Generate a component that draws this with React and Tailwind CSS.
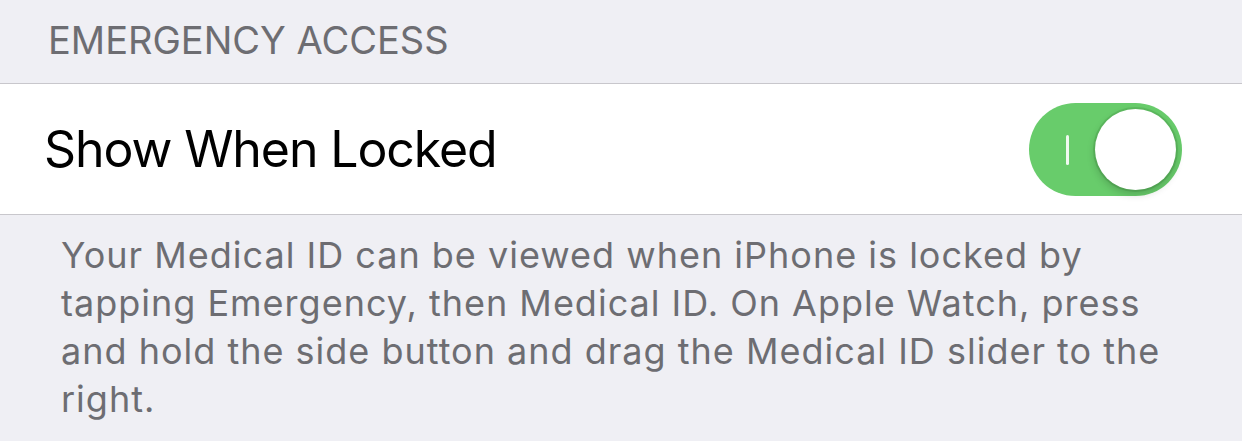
import { useState } from 'react';

const Toggle = ({ on, onChange }) => (
  <button
    onClick={() => onChange(!on)}
    className={`relative flex items-center w-[153px] h-[93px] rounded-full p-[6px] shrink-0 ${on ? 'bg-[#68cc6b] justify-end' : 'bg-[#e5e5ea] justify-start'}`}
    aria-pressed={on}
  >
    {/* on label */}
    {on && <span className="absolute left-[37px] top-[32px] w-[3px] h-[30px] bg-white/90 rounded-sm"></span>}
    <span className="block w-[81px] h-[81px] rounded-full bg-white shadow-[0_4px_8px_rgba(0,0,0,0.2),0_0_0_2px_rgba(60,140,60,0.25)]"></span>
  </button>
);

export default function App() {
  const [showLocked, setShowLocked] = useState(true);

  return (
    <div className="w-[1242px] h-[441px] bg-[#efeff4] font-['Inter',sans-serif] overflow-hidden">
      {/* Section header */}
      <div className="h-[83px] pl-[48px] pt-[21px]">
        <p className="text-[38px] leading-none text-[#6d6d72]">EMERGENCY ACCESS</p>
      </div>

      {/* Row */}
      <div className="bg-white border-y border-[#c8c7cc] h-[132px] flex items-center justify-between pl-[44px] pr-[60px]">
        <span className="text-[50px] leading-none text-black tracking-[-1.1px]">Show When Locked</span>
        <Toggle on={showLocked} onChange={setShowLocked} />
      </div>

      {/* Footer */}
      <div className="pl-[61px] pr-[50px] pt-[16px]">
        <p className="text-[36px] leading-[48px] text-[#6d6d72] tracking-[1px]">
          Your Medical ID can be viewed when iPhone is locked by tapping Emergency, then Medical ID. On Apple Watch, press and hold the side button and drag the Medical ID slider to the right.
        </p>
      </div>
    </div>
  );
}
